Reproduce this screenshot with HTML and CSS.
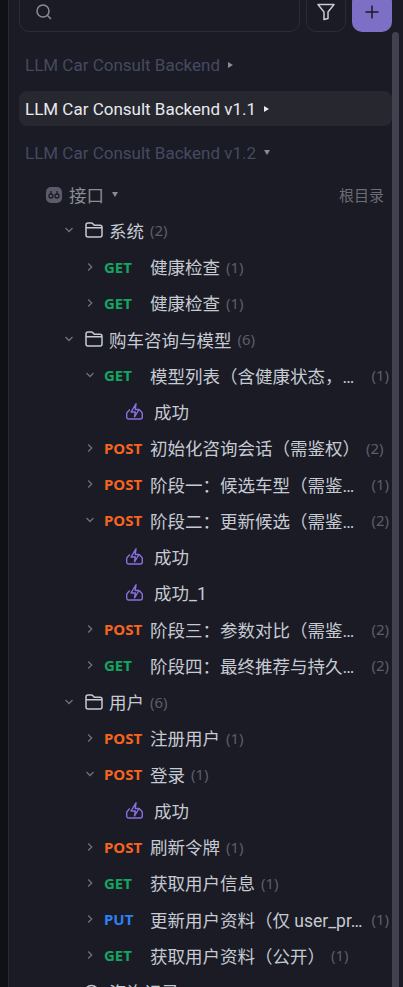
FILE: index.html
```html
<!DOCTYPE html>
<html lang="zh-CN">

<head>
    <meta charset="UTF-8">
    <title>接口目录</title>
    <link rel="stylesheet" href="styles.css">
</head>

<body>
    <svg class="defs" width="0" height="0">
        <symbol id="folder" viewBox="0 0 18 16">
            <path d="M1 4.500V3a2 2 0 0 1 2-2h3.400a2 2 0 0 1 1.500.7L9.300 3.300H15a2 2 0 0 1 2 2V13a2 2 0 0 1-2 2H3a2 2 0 0 1-2-2V4.500Zm0 1.300h16" fill="none" stroke="currentColor" stroke-width="1.500" stroke-linejoin="round" />
        </symbol>
        <symbol id="resp" viewBox="0 0 17 17">
            <path d="M3.800 6.500 1.300 9.200a2 2 0 0 0-.6 1.400V14a2 2 0 0 0 2 2h11.600a2 2 0 0 0 2-2v-3.400a2 2 0 0 0-.6-1.400l-2.500-2.700" fill="none" stroke="currentColor" stroke-width="1.400" stroke-linejoin="round" />
            <path d="M10 .8 5 9h4.300l-.8 4.800L13 6.500H9.200L10 .8Z" fill="none" stroke="currentColor" stroke-width="1.400" stroke-linejoin="round" />
        </symbol>
        <symbol id="chev-r" viewBox="0 0 10 10">
            <path d="M3.200 1.500 6.700 5 3.200 8.500" fill="none" stroke="currentColor" stroke-width="1.300" />
        </symbol>
        <symbol id="chev-d" viewBox="0 0 10 10">
            <path d="M1.500 3 5 6.500 8.500 3" fill="none" stroke="currentColor" stroke-width="1.300" />
        </symbol>
    </svg>

    <div class="panel">
        <div class="toolbar">
            <div class="search">
                <svg width="18" height="18" viewBox="0 0 18 18">
                    <circle cx="8" cy="8" r="6" fill="none" stroke="currentColor" stroke-width="1.500" />
                    <path d="M12.500 12.500 16 16" stroke="currentColor" stroke-width="1.500" />
                </svg>
            </div>
            <div class="filter">
                <svg width="18" height="18" viewBox="0 0 18 18">
                    <path d="M1 1.500h16L11 9v6.500l-4 1V9Z" fill="none" stroke="currentColor" stroke-width="1.500" stroke-linejoin="round" />
                </svg>
            </div>
            <div class="add">
                <svg width="14" height="14" viewBox="0 0 14 14">
                    <path d="M7 0.500v13M0.500 7h13" stroke="currentColor" stroke-width="1.500" />
                </svg>
            </div>
        </div>

        <div class="scroll-thumb"></div>

        <div class="version">LLM Car Consult Backend<span class="caret right"></span></div>
        <div class="version active">LLM Car Consult Backend v1.1<span class="caret right"></span></div>
        <div class="version">LLM Car Consult Backend v1.2<span class="caret down"></span></div>

        <div class="root">
            <span class="root-icon">
                <svg width="16" height="16" viewBox="0 0 16 16">
                    <rect width="16" height="16" rx="5" fill="#5b5c6b" />
                    <circle cx="5" cy="9" r="2" fill="none" stroke="#1a1b25" stroke-width="1.300" />
                    <circle cx="11" cy="9" r="2" fill="none" stroke="#1a1b25" stroke-width="1.300" />
                    <path d="M5 4v3M11 4v3" stroke="#1a1b25" stroke-width="1.300" />
                </svg>
            </span>
            <span class="root-name">接口</span><span class="caret down"></span>
            <span class="root-tag">根目录</span>
        </div>

        <div class="row folder"><svg class="chev" width="10" height="10"><use href="#chev-d" /></svg><svg class="folder-icon" width="18" height="16"><use href="#folder" /></svg><span class="name">系统</span><span class="count">(2)</span></div>
        <div class="row api"><svg class="chev" width="10" height="10"><use href="#chev-r" /></svg><span class="method get">GET</span><span class="name">健康检查</span><span class="count">(1)</span></div>
        <div class="row api"><svg class="chev" width="10" height="10"><use href="#chev-r" /></svg><span class="method get">GET</span><span class="name">健康检查</span><span class="count">(1)</span></div>

        <div class="row folder"><svg class="chev" width="10" height="10"><use href="#chev-d" /></svg><svg class="folder-icon" width="18" height="16"><use href="#folder" /></svg><span class="name">购车咨询与模型</span><span class="count">(6)</span></div>
        <div class="row api cut"><svg class="chev" width="10" height="10"><use href="#chev-d" /></svg><span class="method get">GET</span><span class="name">模型列表（含健康状态，…</span><span class="count">(1)</span></div>
        <div class="row resp"><svg class="resp-icon" width="17" height="17"><use href="#resp" /></svg><span class="name">成功</span></div>
        <div class="row api"><svg class="chev" width="10" height="10"><use href="#chev-r" /></svg><span class="method post">POST</span><span class="name">初始化咨询会话（需鉴权）</span><span class="count">(2)</span></div>
        <div class="row api cut"><svg class="chev" width="10" height="10"><use href="#chev-r" /></svg><span class="method post">POST</span><span class="name">阶段一：候选车型（需鉴…</span><span class="count">(1)</span></div>
        <div class="row api cut"><svg class="chev" width="10" height="10"><use href="#chev-d" /></svg><span class="method post">POST</span><span class="name">阶段二：更新候选（需鉴…</span><span class="count">(2)</span></div>
        <div class="row resp"><svg class="resp-icon" width="17" height="17"><use href="#resp" /></svg><span class="name">成功</span></div>
        <div class="row resp"><svg class="resp-icon" width="17" height="17"><use href="#resp" /></svg><span class="name">成功_1</span></div>
        <div class="row api cut"><svg class="chev" width="10" height="10"><use href="#chev-r" /></svg><span class="method post">POST</span><span class="name">阶段三：参数对比（需鉴…</span><span class="count">(2)</span></div>
        <div class="row api cut"><svg class="chev" width="10" height="10"><use href="#chev-r" /></svg><span class="method get">GET</span><span class="name">阶段四：最终推荐与持久…</span><span class="count">(2)</span></div>

        <div class="row folder"><svg class="chev" width="10" height="10"><use href="#chev-d" /></svg><svg class="folder-icon" width="18" height="16"><use href="#folder" /></svg><span class="name">用户</span><span class="count">(6)</span></div>
        <div class="row api"><svg class="chev" width="10" height="10"><use href="#chev-r" /></svg><span class="method post">POST</span><span class="name">注册用户</span><span class="count">(1)</span></div>
        <div class="row api"><svg class="chev" width="10" height="10"><use href="#chev-d" /></svg><span class="method post">POST</span><span class="name">登录</span><span class="count">(1)</span></div>
        <div class="row resp"><svg class="resp-icon" width="17" height="17"><use href="#resp" /></svg><span class="name">成功</span></div>
        <div class="row api"><svg class="chev" width="10" height="10"><use href="#chev-r" /></svg><span class="method post">POST</span><span class="name">刷新令牌</span><span class="count">(1)</span></div>
        <div class="row api"><svg class="chev" width="10" height="10"><use href="#chev-r" /></svg><span class="method get">GET</span><span class="name">获取用户信息</span><span class="count">(1)</span></div>
        <div class="row api cut"><svg class="chev" width="10" height="10"><use href="#chev-r" /></svg><span class="method put">PUT</span><span class="name">更新用户资料（仅 user_pr…</span><span class="count">(1)</span></div>
        <div class="row api"><svg class="chev" width="10" height="10"><use href="#chev-r" /></svg><span class="method get">GET</span><span class="name">获取用户资料（公开）</span><span class="count">(1)</span></div>

        <div class="row folder"><svg class="chev" width="10" height="10"><use href="#chev-d" /></svg><svg class="folder-icon" width="18" height="16" viewBox="0 0 18 16"><circle cx="6.500" cy="8" r="6.500" fill="none" stroke="currentColor" stroke-width="1.500" /></svg><span class="name">咨询记录</span><span class="count">(3)</span></div>
    </div>
</body>

</html>
```

FILE: styles.css
```css
html,
body {
    margin: 0;
    height: 100%;
    overflow: hidden;
    background-color: #101114;
}

body {
    font-family: 'Roboto', 'Noto Sans CJK SC', sans-serif;
    font-size: 17.5px;
    color: #c6cad2;
}

.defs {
    position: absolute;
}

.panel {
    position: relative;
    height: 100%;
    margin-left: 8px;
    padding: 0 11px 0 10px;
    background-color: #1a1b25;
    border-left: 1px solid #2a2b35;
    overflow: hidden;
}

/* 顶部搜索栏 */
.toolbar {
    display: flex;
    gap: 6px;
    height: 40px;
    margin-top: -8px;
    margin-bottom: 14.750px;
    position: relative;
}

.search,
.filter {
    display: flex;
    align-items: center;
    box-sizing: border-box;
    border: 1px solid #2b2c37;
    border-radius: 10px;
}

.search {
    flex: 1;
    padding-left: 15px;
    color: #8b8c93;
}

.filter {
    width: 40px;
    justify-content: center;
    color: #c6cad2;
}

.add {
    display: flex;
    align-items: center;
    justify-content: center;
    width: 40px;
    background-color: #7e6fc6;
    border-radius: 10px;
    color: #1a1b25;
}

.scroll-thumb {
    position: absolute;
    top: 32px;
    bottom: 0;
    right: 4px;
    width: 7px;
    border-radius: 4px 4px 0 0;
    background-color: #41424f;
}

/* 版本列表 */
.version {
    display: flex;
    align-items: center;
    box-sizing: border-box;
    height: 35px;
    margin-bottom: 8.750px;
    padding: 2px 0 0 6px;
    border-radius: 8px;
    font-size: 17px;
    color: #454a60;
    white-space: nowrap;
}

.version.active {
    background-color: #26272f;
    color: #e8eaee;
}

.caret {
    display: inline-block;
    margin-left: 8px;
    color: #8b8c93;
}

.caret.right {
    border-left: 5px solid currentColor;
    border-top: 3.500px solid transparent;
    border-bottom: 3.500px solid transparent;
}

.caret.down {
    border-top: 5px solid currentColor;
    border-left: 3.500px solid transparent;
    border-right: 3.500px solid transparent;
}

.version.active .caret {
    color: #e8eaee;
}

.root {
    display: flex;
    align-items: center;
    box-sizing: border-box;
    height: 36.250px;
    margin-top: -2px;
    padding: 1px 0 0 27px;
    color: #8b8c93;
}

.root-icon {
    display: flex;
    margin-right: 7px;
}

.root-tag {
    margin-left: auto;
    margin-right: 8px;
    font-size: 15px;
    color: #6a6b73;
}

/* 接口树 */
.row {
    display: flex;
    align-items: center;
    height: 36.250px;
    white-space: nowrap;
}

.count {
    flex: none;
    margin-left: 6px;
    margin-right: 3px;
    font-family: 'Noto Sans', sans-serif;
    font-size: 15px;
    color: #5c5e68;
}

.cut .count {
    margin-left: auto;
}

.chev {
    flex: none;
    color: #70717a;
}

.folder {
    padding-left: 45px;
}

.folder .chev {
    margin-right: 11px;
}

.folder .name {
    margin-left: 6px;
}

.folder-icon {
    color: #c6cad2;
}

.api {
    padding-left: 66px;
}

.api .chev {
    margin-right: 9px;
}

.method {
    flex: none;
    width: 46px;
    font-family: 'Noto Sans', sans-serif;
    font-size: 15px;
    font-weight: 700;
}

.get {
    color: #12a661;
}

.post {
    color: #f7641e;
}

.put {
    color: #2b82f6;
}

.resp {
    padding-left: 107px;
}

.resp-icon {
    color: #8a6fe0;
    margin-right: 11px;
}
```
